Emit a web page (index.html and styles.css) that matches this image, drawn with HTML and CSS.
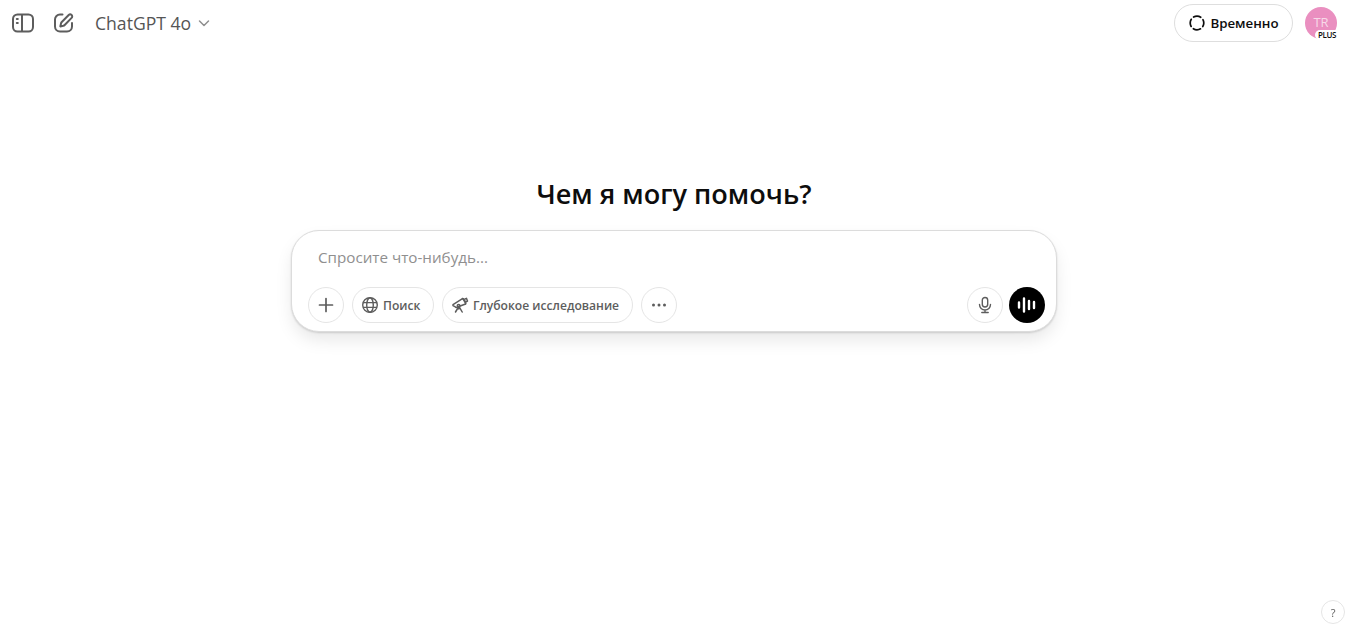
FILE: index.html
```html
<!DOCTYPE html>
<html lang="ru">
<head>
<meta charset="utf-8">
<title>ChatGPT</title>
<link rel="stylesheet" href="styles.css">
</head>
<body>
<header class="topbar">
  <div class="topbar-left">
    <button class="icon-btn" aria-label="Sidebar">
      <svg width="24" height="24" viewBox="0 0 24 24" fill="none" stroke="#5d5d5d" stroke-width="2" stroke-linecap="round"><rect x="2" y="3.500" width="20" height="17" rx="4.500"/><path d="M11 4v16"/><path d="M5.800 8h1M5.800 12h1"/></svg>
    </button>
    <button class="icon-btn" aria-label="New chat">
      <svg width="24" height="24" viewBox="0 0 24 24" fill="none" stroke="#5d5d5d" stroke-width="2" stroke-linecap="round" stroke-linejoin="round"><path d="M10.500 3.500H8a5 5 0 0 0-5 5v7a5 5 0 0 0 5 5h7a5 5 0 0 0 5-5v-3.500"/><path d="M16.700 4a2 2 0 0 1 2.900 2.900l-6.900 7.100a3 3 0 0 1-1.400.8l-3 .6.700-3a3 3 0 0 1 .8-1.400z"/></svg>
    </button>
    <button class="model-btn">ChatGPT 4o
      <svg width="16" height="16" viewBox="0 0 16 16" fill="none" stroke="#8f8f8f" stroke-width="1.500" stroke-linecap="round" stroke-linejoin="round"><path d="M3.500 6l4.500 4.500L12.500 6"/></svg>
    </button>
  </div>
  <div class="topbar-right">
    <button class="temp-btn">
      <svg width="18" height="18" viewBox="0 0 18 18" fill="none" stroke="#0d0d0d" stroke-width="1.700" stroke-linecap="round"><circle cx="9" cy="9" r="6.800" stroke-dasharray="7.500 3.180" stroke-dashoffset="3.750"/></svg>
      Временно
    </button>
    <div class="avatar"><span class="initials">TR</span><span class="plus">PLUS</span></div>
  </div>
</header>
<main class="main">
  <h1 class="title">Чем я могу помочь?</h1>
  <section class="composer">
    <div class="placeholder">Спросите что-нибудь...</div>
    <div class="tools">
      <div class="tools-group">
        <button class="round" aria-label="Add">
          <svg width="20" height="20" viewBox="0 0 20 20" fill="none" stroke="#5d5d5d" stroke-width="1.700" stroke-linecap="round"><path d="M10 3.500v13M3.500 10h13"/></svg>
        </button>
        <button class="pill">
          <svg width="18" height="18" viewBox="0 0 18 18" fill="none" stroke="#5d5d5d" stroke-width="1.400"><circle cx="9" cy="9" r="7.300"/><ellipse cx="9" cy="9" rx="3.300" ry="7.300"/><path d="M2 6.600h14M2 11.400h14"/></svg>
          Поиск
        </button>
        <button class="pill">
          <svg width="18" height="18" viewBox="0 0 18 18" fill="none" stroke="#5d5d5d" stroke-width="1.500" stroke-linecap="round" stroke-linejoin="round"><path d="M2 8.600l9.500-6 .5.300 2.700 4.500-.1.600-8.800 3.300a1.300 1.300 0 0 1-1.500-.5L2 9.600z"/><path d="M11.500 2.600c1-.8 3.800 3.700 3.100 5.300"/><path d="M14 3l1.500-.6 1 2.600-1.300.8"/><path d="M7.500 11l-3 5M8.200 10.800l3 5.200M7.800 11v2"/><circle cx="7.600" cy="9.800" r="1.300"/></svg>
          Глубокое исследование
        </button>
        <button class="round" aria-label="More">
          <svg width="18" height="18" viewBox="0 0 18 18" fill="#5d5d5d"><circle cx="3.500" cy="9" r="1.500"/><circle cx="9" cy="9" r="1.500"/><circle cx="14.500" cy="9" r="1.500"/></svg>
        </button>
      </div>
      <div class="tools-group tools-end">
        <button class="round" aria-label="Dictate">
          <svg width="18" height="18" viewBox="0 0 18 18" fill="none" stroke="#5d5d5d" stroke-width="1.400" stroke-linecap="round"><rect x="6.300" y="1.500" width="5.400" height="9.500" rx="2.700"/><path d="M3.500 8.500a5.500 5.500 0 0 0 11 0M9 14v2.500M5.800 16.500h6.400"/></svg>
        </button>
        <button class="voice" aria-label="Voice">
          <svg width="20" height="20" viewBox="0 0 20 20" fill="none" stroke="#fff" stroke-width="2.400" stroke-linecap="round"><path d="M2 7.500v5M7 3.500v13M12 6v8M17 7v6"/></svg>
        </button>
      </div>
    </div>
  </section>
</main>
<button class="help" aria-label="Help">?</button>
</body>
</html>
```
FILE: styles.css
```css
* { box-sizing: border-box; }
html, body { height: 100%; }
body {
  margin: 0;
  background: #fff;
  color: #0d0d0d;
  font-family: "Open Sans", "Noto Sans", sans-serif;
  overflow: hidden;
}
button {
  font-family: inherit;
  background: none;
  border: 0;
  padding: 0;
  display: flex;
  align-items: center;
  justify-content: center;
}
.topbar {
  height: 47px;
  padding: 0 19px 1px 11px;
  display: flex;
  align-items: center;
  justify-content: space-between;
}
.topbar-left, .topbar-right { display: flex; align-items: center; }
.icon-btn { width: 24px; height: 24px; margin-right: 17px; }
.model-btn {
  margin-left: 2px;
  font-size: 17.600px;
  font-weight: 500;
  color: #555;
  gap: 5px;
}
.temp-btn {
  width: 119px;
  height: 38px;
  gap: 4px;
  border: 1px solid #dedede;
  border-radius: 19px;
  font-size: 13.300px;
  font-weight: 600;
  color: #0d0d0d;
  margin-right: 1px;
}
.avatar {
  position: relative;
  width: 32px;
  height: 32px;
  margin-left: 11px;
  border-radius: 50%;
  background: #ea8fc0;
  display: flex;
  align-items: center;
  justify-content: center;
}
.initials { color: #f7d9e8; font-size: 13px; margin-top: -2px; }
.plus {
  position: absolute;
  right: -2px;
  bottom: -1px;
  padding: 0 3px;
  height: 10px;
  line-height: 10px;
  border-radius: 5px;
  background: #fff;
  color: #0d0d0d;
  font-size: 8px;
  font-weight: 600;
  letter-spacing: -.4px;
}
.main {
  padding: 126px 8px 0 0;
  display: flex;
  flex-direction: column;
  align-items: center;
}
.title {
  margin: 0 0 16px;
  height: 41px;
  line-height: 41px;
  font-size: 27.100px;
  font-weight: 600;
  color: #0d0d0d;
}
.composer {
  width: 766px;
  height: 102px;
  padding: 16px 11px 8px 16px;
  border: 1px solid #dcdcdc;
  border-radius: 28px;
  background: #fff;
  box-shadow: 0 9px 18px -2px rgba(0,0,0,.1), 0 1px 2px rgba(0,0,0,.14);
  display: flex;
  flex-direction: column;
  justify-content: space-between;
}
.placeholder { margin-left: 10px; font-size: 15.200px; line-height: 20px; color: #8f8f8f; }
.tools { display: flex; justify-content: space-between; align-items: center; }
.tools-group { display: flex; align-items: center; gap: 8px; }
.tools-end { gap: 6px; }
.round {
  width: 36px;
  height: 36px;
  border: 1px solid #e5e5e5;
  border-radius: 50%;
}
.pill {
  height: 36px;
  padding: 0 12.500px 0 8px;
  gap: 4px;
  border: 1px solid #e5e5e5;
  border-radius: 18px;
  font-size: 12.100px;
  font-weight: 600;
  color: #5d5d5d;
}
.voice { width: 36px; height: 36px; border-radius: 50%; background: #000; }
.help {
  position: fixed;
  right: 11px;
  bottom: 3px;
  width: 24px;
  height: 24px;
  border: 1px solid #e5e5e5;
  border-radius: 50%;
  font-size: 11px;
  color: #5d5d5d;
}
```
